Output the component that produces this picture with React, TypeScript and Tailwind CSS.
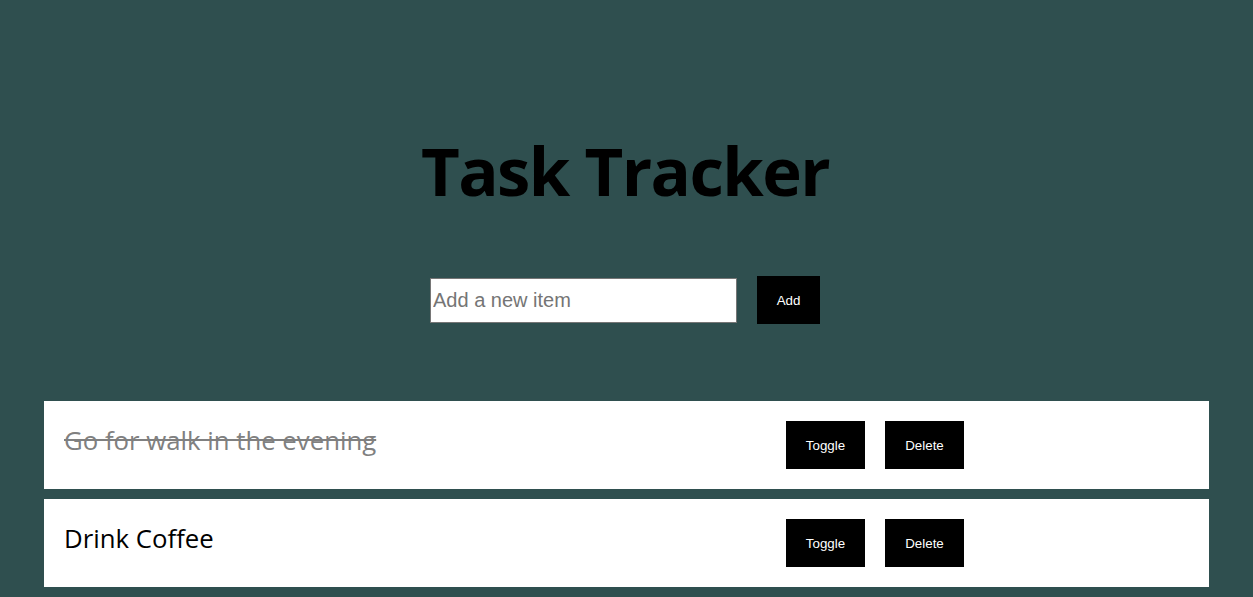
import React from "react";

const tasks = [
  { text: "Go for walk in the evening", done: true },
  { text: "Drink Coffee", done: false },
];

function ActionButton({ label }: { label: string }) {
  return (
    <button className="h-[48px] w-[79px] bg-black pt-[2px] font-['Liberation_Sans',Arial,sans-serif] text-[13.33px] text-white">
      {label}
    </button>
  );
}

export default function App() {
  return (
    <div className="min-h-[597px] w-full bg-[#2f4f4f] pt-[120px] font-['Open_Sans','Noto_Sans',sans-serif]">
      <h1 className="pr-[3px] text-center text-[67px] font-bold leading-[100px] tracking-[-1.6px] text-black">
        Task Tracker
      </h1>
      <div className="mt-[56px] flex items-center justify-center gap-[20px] pr-[3px]">
        <input
          placeholder="Add a new item"
          className="h-[45px] w-[307px] border border-[#767676] bg-white px-[2px] font-['Liberation_Sans',Arial,sans-serif] text-[20px] text-black outline-none placeholder:text-[#757575]"
        />
        <button className="h-[48px] w-[63px] bg-black pt-[2px] font-['Liberation_Sans',Arial,sans-serif] text-[13.33px] text-white">
          Add
        </button>
      </div>
      <ul className="mx-auto mt-[77px] flex w-[1165px] flex-col gap-[10px]">
        {tasks.map((t) => (
          <li key={t.text} className="flex h-[88px] items-start bg-white p-[20px]">
            <span
              className={`w-[722px] text-[25.75px] leading-[38px] ${
                t.done ? "text-[#808080] line-through" : "text-black"
              }`}
            >
              {t.text}
            </span>
            <div className="flex gap-[20px]">
              <ActionButton label="Toggle" />
              <ActionButton label="Delete" />
            </div>
          </li>
        ))}
      </ul>
    </div>
  );
}
